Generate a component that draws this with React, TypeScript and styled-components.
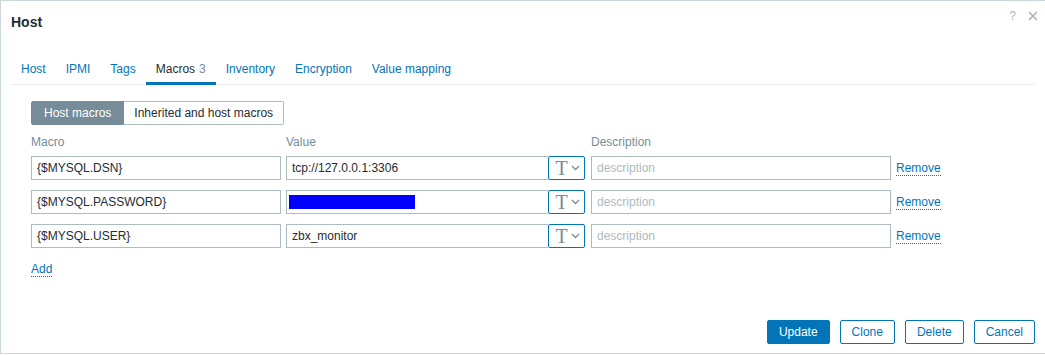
import React from 'react';
import styled, { createGlobalStyle } from 'styled-components';

const GlobalStyle = createGlobalStyle`
  html, body { margin: 0; padding: 0; background: #ffffff; }
  body {
    font-family: "Liberation Sans", Arial, sans-serif;
    font-size: 12px;
    color: #1f2c33;
  }
`;

const Dialog = styled.div`
  box-sizing: border-box;
  width: 1046px;
  height: 354px;
  border: 1px solid #ccd5d9;
  background: #ffffff;
  display: flex;
  flex-direction: column;
  position: relative;
`;

const Header = styled.div`
  height: 44px;
  box-sizing: border-box;
  padding: 13px 10px 0;
`;

const Title = styled.h4`
  margin: 0;
  font-size: 14px;
  line-height: 16px;
  font-weight: bold;
  color: #1f2c33;
`;

const HeaderControls = styled.div`
  position: absolute;
  top: 8px;
  right: 7px;
  display: flex;
  align-items: center;
  gap: 12px;
  color: #aab5bc;
`;

const HelpMark = styled.span`
  font-size: 12px;
  line-height: 14px;
`;

const Body = styled.div`
  padding: 10px 10px 0;
`;

const TabList = styled.ul`
  list-style: none;
  margin: 0;
  padding: 0;
  display: flex;
  border-bottom: 1px solid #ebeef0;
`;

const Tab = styled.li<{ $active?: boolean }>`
  padding: 7px 10px 6px;
  line-height: 14px;
  margin-bottom: -1px;
  border-bottom: 3px solid ${(p) => (p.$active ? '#0275b8' : 'transparent')};
  color: ${(p) => (p.$active ? '#1f2c33' : '#0275b8')};
  cursor: pointer;
`;

const TabCount = styled.span`
  font-size: 12px;
  color: #768d99;
  margin-left: 4px;
`;

const TabContent = styled.div`
  padding: 16px 20px 0;
`;

const Segmented = styled.div`
  display: inline-flex;
  height: 24px;
`;

const SegButton = styled.button<{ $checked?: boolean }>`
  box-sizing: border-box;
  height: 24px;
  padding: ${(p) => (p.$checked ? '0 12px' : '0 10px')};
  font-family: inherit;
  font-size: 12px;
  border: 1px solid ${(p) => (p.$checked ? '#768d99' : '#acbbc2')};
  background: ${(p) => (p.$checked ? '#768d99' : '#ffffff')};
  color: ${(p) => (p.$checked ? '#ffffff' : '#1f2c33')};
  border-radius: ${(p) => (p.$checked ? '2px 0 0 2px' : '0 2px 2px 0')};
  border-left-width: ${(p) => (p.$checked ? '1px' : '0')};
`;

const MacroGrid = styled.div`
  display: grid;
  grid-template-columns: 250px 300px 300px auto;
  column-gap: 5px;
  row-gap: 10px;
  margin-top: 10px;
  align-items: center;
`;

const ColLabel = styled.div`
  line-height: 14px;
  color: #768d99;
  margin-bottom: -3px;
`;

const Field = styled.div<{ $placeholder?: boolean }>`
  box-sizing: border-box;
  height: 24px;
  border: 1px solid #acbbc2;
  padding: 0 5px;
  display: flex;
  align-items: center;
  white-space: nowrap;
  overflow: hidden;
  color: ${(p) => (p.$placeholder ? '#acbbc2' : '#1f2c33')};
  background: #ffffff;
`;

const ValueGroup = styled.div`
  display: flex;
  width: 299px;
`;

const ValueField = styled(Field)`
  flex: 1;
  border-right: none;
`;

const Redacted = styled.span`
  display: inline-block;
  width: 126px;
  height: 14px;
  background: #0000ff;
  margin-left: -3px;
`;

const TypeButton = styled.button`
  box-sizing: border-box;
  width: 37px;
  height: 24px;
  border: 1px solid #0275b8;
  border-radius: 2px;
  background: #ffffff;
  display: flex;
  align-items: center;
  justify-content: center;
  gap: 3px;
  padding: 0 0 0 2px;
`;

const TypeGlyph = styled.span`
  font-family: "Liberation Serif", "Times New Roman", serif;
  font-size: 20px;
  line-height: 20px;
  color: #768d99;
`;

const LinkText = styled.a`
  color: #0275b8;
  text-decoration: none;
  border-bottom: 1px dotted #0275b8;
  line-height: 14px;
  cursor: pointer;
  justify-self: start;
`;

const RemoveCell = styled.div`
  display: flex;
  align-items: center;
`;

const AddRow = styled.div`
  margin-top: 14px;
`;

const Footer = styled.div`
  margin-top: auto;
  display: flex;
  justify-content: flex-end;
  gap: 10px;
  padding: 0 10px 9px 0;
`;

const Button = styled.button<{ $primary?: boolean }>`
  box-sizing: border-box;
  height: 24px;
  padding: 0 11px;
  border-radius: 2px;
  font-family: inherit;
  font-size: 12px;
  border: 1px solid #0275b8;
  background: ${(p) => (p.$primary ? '#0275b8' : '#ffffff')};
  color: ${(p) => (p.$primary ? '#ffffff' : '#0275b8')};
  cursor: pointer;
`;

const Chevron = () => (
  <svg width="9" height="6" viewBox="0 0 9 6">
    <polyline points="1,1 4.5,4.5 8,1" fill="none" stroke="#768d99" strokeWidth="1.3" />
  </svg>
);

const CloseIcon = () => (
  <svg width="10" height="10" viewBox="0 0 10 10">
    <path d="M1 1 L9 9 M9 1 L1 9" stroke="#aab5bc" strokeWidth="1.6" />
  </svg>
);

type Macro = { name: string; value?: string; hidden?: boolean };

const macros: Macro[] = [
  { name: '{$MYSQL.DSN}', value: 'tcp://127.0.0.1:3306' },
  { name: '{$MYSQL.PASSWORD}', hidden: true },
  { name: '{$MYSQL.USER}', value: 'zbx_monitor' },
];

const tabs = ['Host', 'IPMI', 'Tags', 'Macros', 'Inventory', 'Encryption', 'Value mapping'];

const App = () => {
  return (
    <>
      <GlobalStyle />
      <Dialog>
        <Header>
          <Title>Host</Title>
        </Header>
        <HeaderControls>
          <HelpMark>?</HelpMark>
          <CloseIcon />
        </HeaderControls>
        <Body>
          <TabList>
            {tabs.map((t) => (
              <Tab key={t} $active={t === 'Macros'}>
                {t}
                {t === 'Macros' && <TabCount>3</TabCount>}
              </Tab>
            ))}
          </TabList>
          <TabContent>
            <Segmented>
              <SegButton $checked>Host macros</SegButton>
              <SegButton>Inherited and host macros</SegButton>
            </Segmented>
            <MacroGrid>
              <ColLabel>Macro</ColLabel>
              <ColLabel>Value</ColLabel>
              <ColLabel>Description</ColLabel>
              <div />
              {macros.map((m) => (
                <React.Fragment key={m.name}>
                  <Field>{m.name}</Field>
                  <ValueGroup>
                    <ValueField>{m.hidden ? <Redacted /> : m.value}</ValueField>
                    <TypeButton>
                      <TypeGlyph>T</TypeGlyph>
                      <Chevron />
                    </TypeButton>
                  </ValueGroup>
                  <Field $placeholder>description</Field>
                  <RemoveCell>
                    <LinkText>Remove</LinkText>
                  </RemoveCell>
                </React.Fragment>
              ))}
            </MacroGrid>
            <AddRow>
              <LinkText>Add</LinkText>
            </AddRow>
          </TabContent>
        </Body>
        <Footer>
          <Button $primary>Update</Button>
          <Button>Clone</Button>
          <Button>Delete</Button>
          <Button>Cancel</Button>
        </Footer>
      </Dialog>
    </>
  );
};

export default App;
